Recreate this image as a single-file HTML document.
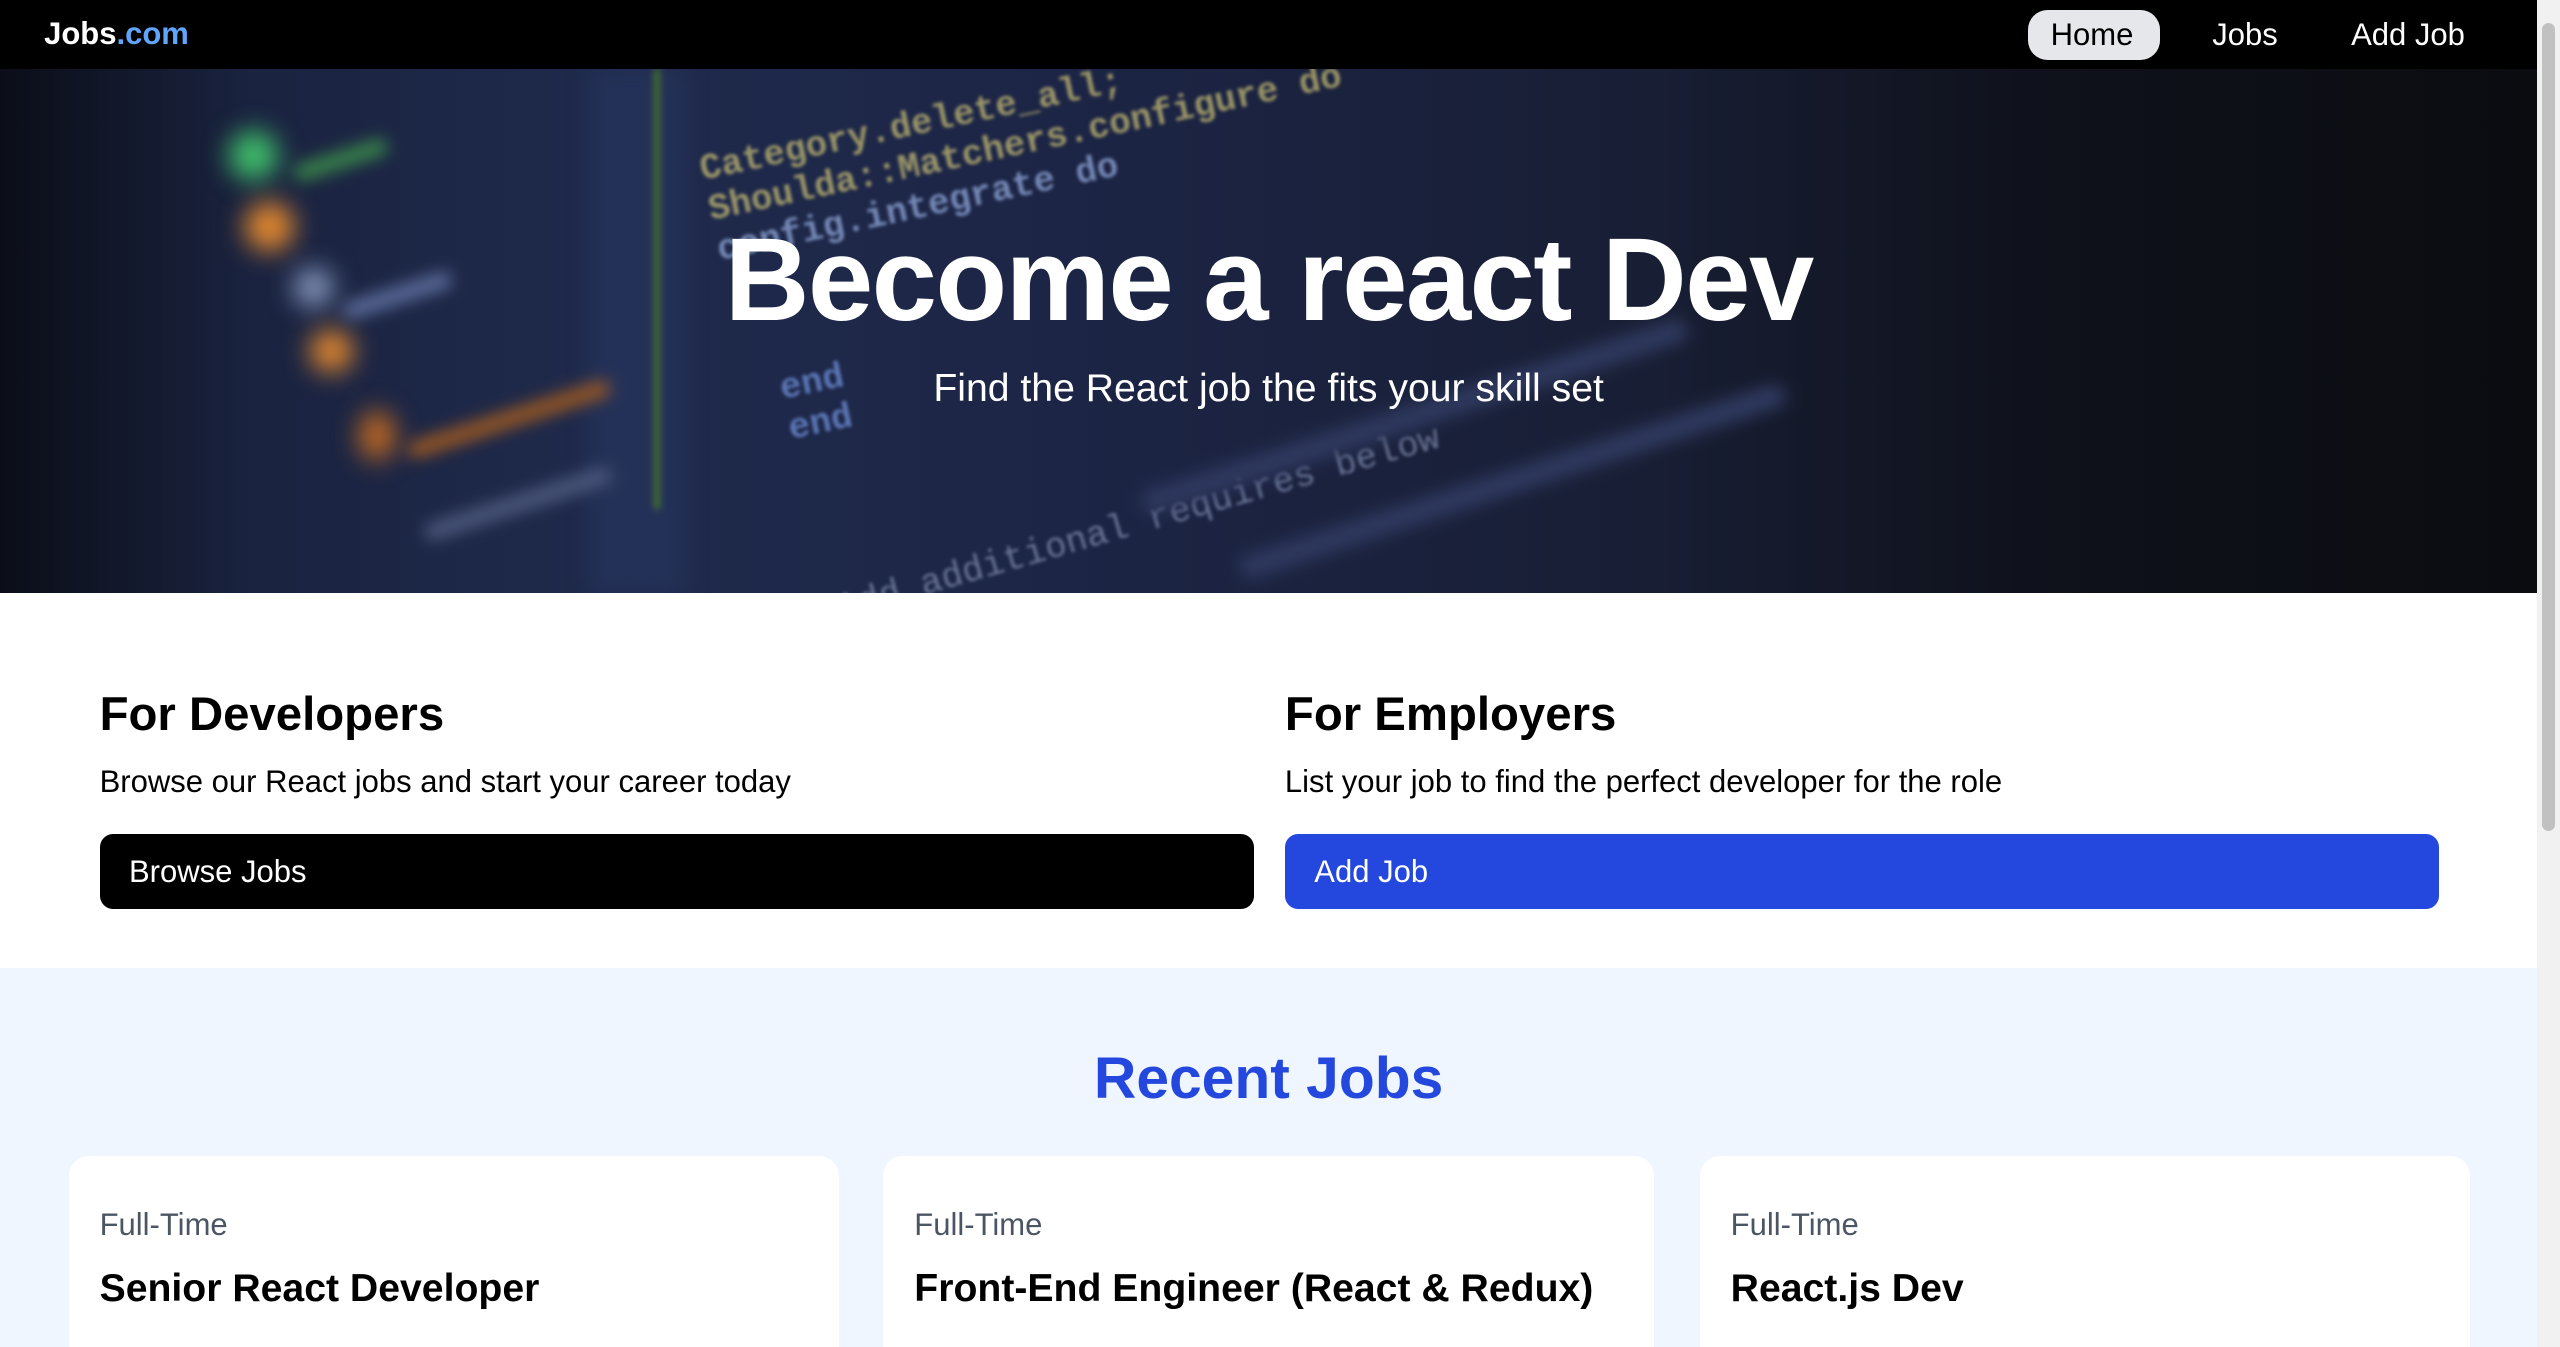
<!DOCTYPE html>
<html><head><meta charset="utf-8">
<style>
*{margin:0;padding:0;box-sizing:border-box}
html,body{width:2560px;height:1347px;overflow:hidden;background:#fff}
#root{zoom:1.6327;width:1568px;height:825px;position:relative;font-family:"Liberation Sans",sans-serif;overflow:hidden}
.sb{position:absolute;right:0;top:0;width:14px;height:825px;background:#f1f1f1}
.sb div{position:absolute;left:3px;top:14px;width:8px;height:495px;background:#c1c1c1;border-radius:4px}
nav{position:absolute;left:0;top:0;width:1554px;height:42px;background:#000;color:#fff}
.logo{position:absolute;left:27px;top:10px;font-size:19px;font-weight:bold}
.logo span{color:#60a5fa}
.nl{position:absolute;top:6px;height:31px;line-height:31px;font-size:19px;padding:0 14px;border-radius:12px}
.hero{position:absolute;left:0;top:42px;width:1554px;height:321px;overflow:hidden;
background:linear-gradient(90deg,#0b0e18 0%,#1a2340 10%,#1f2a4c 25%,#1c2444 45%,#181e34 65%,#0f121c 80%,#0b0c10 100%)}
.blob{position:absolute;border-radius:50%;filter:blur(8px)}
.line{position:absolute;height:10px;border-radius:5px;filter:blur(5px);transform:rotate(-18deg);transform-origin:left}
.hero h1{position:absolute;left:0;width:1554px;top:88px;text-align:center;color:#fff;font-size:72px;font-weight:bold;letter-spacing:-1px}
.hero p{position:absolute;left:0;width:1554px;top:183px;text-align:center;color:#fff;font-size:24px}
.sec{position:absolute;left:0;top:363px;width:1554px;height:230px;background:#fff}
.col{position:absolute;top:57px;width:707px}
.col h2{font-size:29px;font-weight:bold;line-height:36px}
.col p{font-size:19px;margin-top:11px;line-height:24px}
.btn{margin-top:20px;height:46px;border-radius:8px;color:#fff;font-size:19px;line-height:46px;padding-left:18px}
.recent{position:absolute;left:0;top:593px;width:1554px;height:232px;background:#eff6ff}
.recent h2{position:absolute;left:0;width:1554px;top:47px;text-align:center;color:#2447dd;font-size:36px;font-weight:bold}
.card{position:absolute;top:115px;width:472px;height:117px;background:#fff;border-radius:12px 12px 0 0;padding:31px 19px 0}
.card .t{color:#4b5563;font-size:19px}
.card h3{font-size:24px;font-weight:bold;margin-top:15px}
</style></head><body><div id="root">
<nav>
<div class="logo">Jobs<span>.com</span></div>
<div class="nl" style="left:1242px;width:81px;background:#e5e7eb;color:#000">Home</div>
<div class="nl" style="left:1341px">Jobs</div>
<div class="nl" style="left:1426px">Add Job</div>
</nav>
<div class="hero">
<div style="position:absolute;left:360px;top:0;width:60px;height:321px;background:rgba(40,55,100,.5);filter:blur(6px)"></div>
<div style="position:absolute;left:400px;top:0;width:5px;height:270px;background:#4a7a2a;filter:blur(2px);opacity:.7"></div>
<div class="blob" style="left:140px;top:38px;width:30px;height:30px;background:#3fbf6a"></div>
<div class="blob" style="left:150px;top:82px;width:30px;height:30px;background:#e68a2e"></div>
<div class="blob" style="left:180px;top:122px;width:24px;height:24px;background:#8a9ac0"></div>
<div class="blob" style="left:190px;top:160px;width:26px;height:26px;background:#e68a2e"></div>
<div class="blob" style="left:220px;top:210px;width:22px;height:30px;background:#c46a20"></div>
<div class="line" style="left:180px;top:60px;width:60px;background:#3a8a4a"></div>
<div class="line" style="left:210px;top:145px;width:70px;background:#6070a0"></div>
<div class="line" style="left:250px;top:230px;width:130px;background:#a05a20"></div>
<div class="line" style="left:260px;top:280px;width:120px;background:#505c80"></div>
<div style="position:absolute;left:430px;top:8px;color:#b8b070;font:bold 22px 'Liberation Mono',monospace;transform:rotate(-12deg);filter:blur(1px);opacity:.8">Category.delete_all;<br>Shoulda::Matchers.configure do<br><span style="color:#8aa0d0">config.integrate do</span></div>
<div style="position:absolute;left:480px;top:180px;color:#6a8ad0;font:bold 22px 'Liberation Mono',monospace;transform:rotate(-12deg);filter:blur(1px);opacity:.8">end<br>end</div>
<div style="position:absolute;left:480px;top:270px;color:#8a96b8;font:22px 'Liberation Mono',monospace;transform:rotate(-16deg);filter:blur(1px);opacity:.7"># Add additional requires below</div>
<div class="line" style="left:700px;top:260px;width:350px;background:#2f3a60;height:14px"></div>
<div class="line" style="left:760px;top:300px;width:350px;background:#2f3a60;height:14px"></div>
<h1>Become a react Dev</h1>
<p>Find the React job the fits your skill set</p>
</div>
<div class="sec">
<div class="col" style="left:61px"><h2>For Developers</h2><p>Browse our React jobs and start your career today</p><div class="btn" style="background:#000">Browse Jobs</div></div>
<div class="col" style="left:787px"><h2>For Employers</h2><p>List your job to find the perfect developer for the role</p><div class="btn" style="background:#2447dd">Add Job</div></div>
</div>
<div class="recent">
<h2>Recent Jobs</h2>
<div class="card" style="left:42px"><div class="t">Full-Time</div><h3>Senior React Developer</h3></div>
<div class="card" style="left:541px"><div class="t">Full-Time</div><h3>Front-End Engineer (React &amp; Redux)</h3></div>
<div class="card" style="left:1041px"><div class="t">Full-Time</div><h3>React.js Dev</h3></div>
</div>
<div class="sb"><div></div></div>
</div></body></html>
